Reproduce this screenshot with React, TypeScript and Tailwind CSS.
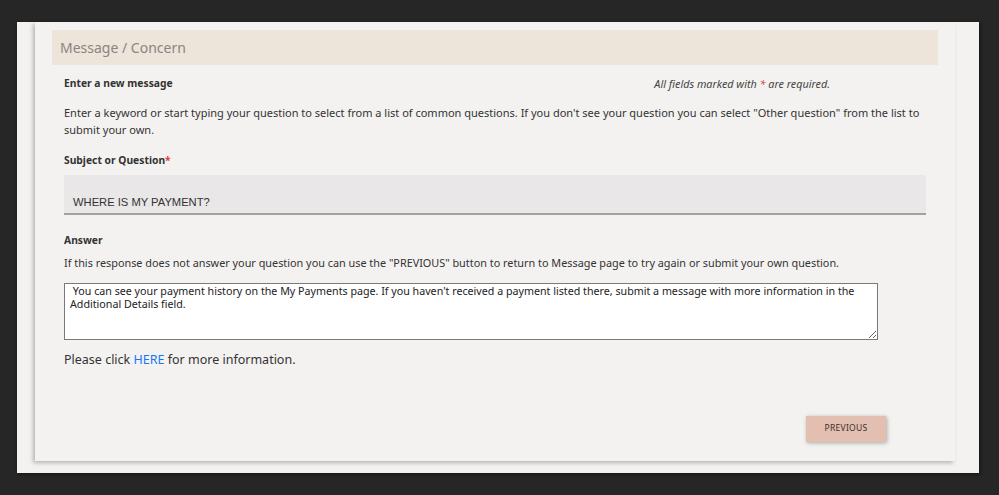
import React from 'react';

// Message / Concern form card
export default function App() {
  return (
    <div className="w-[999px] h-[495px] bg-[#262626] pt-[22px] pl-[17px] overflow-hidden" style={{ fontFamily: '"Noto Sans", "Open Sans", sans-serif' }}>
      <div className="w-[962px] h-[451px] bg-[#f3f2f0] shadow-[1px_1px_3px_rgba(0,0,0,0.5)]">
        <div className="ml-[18px] w-[920px] h-[439px] bg-[#f3f2f0] shadow-[-2px_2px_4px_rgba(0,0,0,0.25)] pt-[8px] pl-[17px]">
          {/* header band */}
          <div className="w-[886px] h-[35px] bg-[#ede4da] flex items-center pl-[8px]">
            <h2 className="text-[14px] text-[#8b8480]">Message / Concern</h2>
          </div>

          <div className="pl-[12px] pr-[12px] w-[886px] text-[#333] text-[11px]">
            <div className="flex items-center justify-between mt-[11px] h-[16px]">
              <span className="font-bold text-[10.3px]">Enter a new message</span>
              <span className="italic text-[10.8px] text-[#444] mr-[96px]">
                All fields marked with <span className="text-[#e53935]">*</span> are required.
              </span>
            </div>

            <p className="mt-[12px] leading-[17px] w-[860px]">
              Enter a keyword or start typing your question to select from a list of common questions. If you don't see your question you can select "Other question" from the list to submit your own.
            </p>

            <div className="mt-[14px] font-bold text-[10.3px] leading-[16px]">
              Subject or Question<span className="text-[#e53935]">*</span>
            </div>

            <div className="mt-[7px] w-[862px] h-[40px] bg-[#e9e7e7] border-b-2 border-[#a3a1a1] rounded-t-[2px] flex items-end pl-[9px] pb-[2px]">
              <span className="text-[11.2px] text-[#333]" style={{ fontFamily: '"Liberation Sans", Arial, sans-serif' }}>WHERE IS MY PAYMENT?</span>
            </div>

            <div className="mt-[17px] font-bold text-[10.3px] leading-[16px]">Answer</div>
            <p className="mt-[6px] leading-[17px] text-[10.85px]">
              If this response does not answer your question you can use the "PREVIOUS" button to return to Message page to try again or submit your own question.
            </p>

            <textarea
              readOnly
              className="mt-[12px] block w-[814px] h-[57px] bg-white border border-[#7a7a7a] px-[5px] py-[1px] text-[10.7px] leading-[13px] text-[#222] resize-y outline-none"
              style={{ fontFamily: '"Noto Sans", "Open Sans", sans-serif' }}
              value={" You can see your payment history on the My Payments page. If you haven't received a payment listed there, submit a message with more information in the Additional Details field."}
            />

            <p className="mt-[11px] text-[12.5px] text-[#333]">
              Please click <a className="text-[#1877f2]">HERE</a> for more information.
            </p>

            <div className="flex justify-end pr-[40px] mt-[46px]">
              <button className="w-[80px] h-[26px] bg-[#e2bfb0] text-[8.5px] text-[#3d2e2a] tracking-[0.3px] shadow-[1px_1px_4px_rgba(0,0,0,0.3)]">
                PREVIOUS
              </button>
            </div>
          </div>
        </div>
      </div>
    </div>
  );
}
